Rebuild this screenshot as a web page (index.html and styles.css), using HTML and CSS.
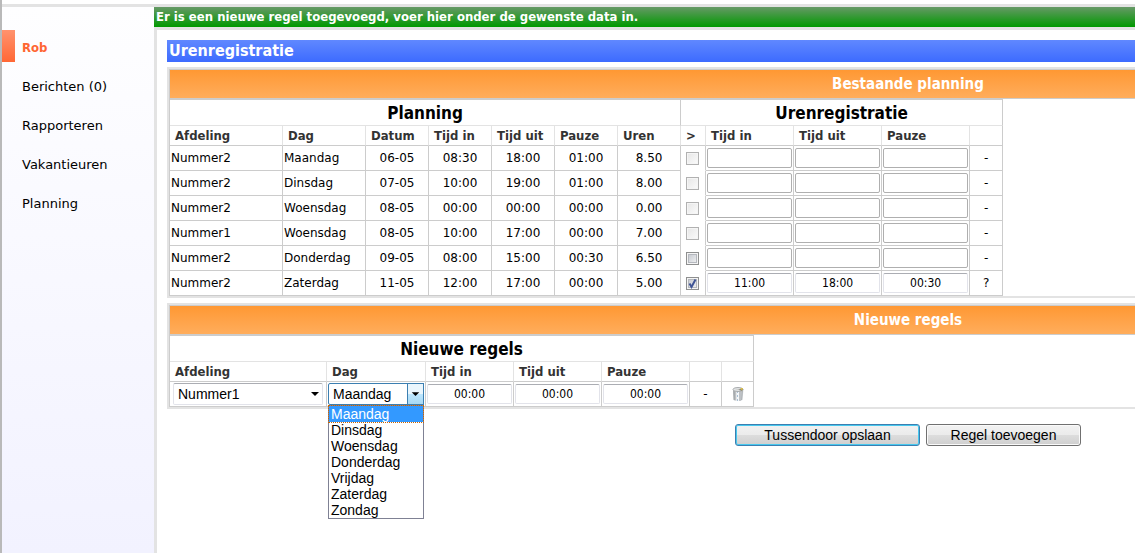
FILE: index.html
```html
<!DOCTYPE html>
<html lang="nl">
<head>
<meta charset="utf-8">
<title>Urenregistratie</title>
<link rel="stylesheet" href="styles.css">
</head>
<body>
<div class="page">
  <nav class="sidebar">
    <a class="nav-item active" href="#">Rob</a>
    <a class="nav-item" href="#">Berichten (0)</a>
    <a class="nav-item" href="#">Rapporteren</a>
    <a class="nav-item" href="#">Vakantieuren</a>
    <a class="nav-item" href="#">Planning</a>
  </nav>
  <main class="main">
    <p class="notice">Er is een nieuwe regel toegevoegd, voer hier onder de gewenste data in.</p>
    <form class="content">
      <h1 class="title">Urenregistratie</h1>

      <section class="panel">
        <h2 class="panel-title">Bestaande planning</h2>
        <table class="grid planning">
          <colgroup><col class="c-dept"><col class="c-day"><col class="c-num" span="5"><col class="c-check"><col class="c-input" span="3"><col class="c-last"></colgroup>
          <thead>
            <tr class="group"><th colspan="7">Planning</th><th colspan="5">Urenregistratie</th></tr>
            <tr class="head"><th>Afdeling</th><th>Dag</th><th>Datum</th><th>Tijd in</th><th>Tijd uit</th><th>Pauze</th><th>Uren</th><th>&gt;</th><th>Tijd in</th><th>Tijd uit</th><th>Pauze</th><th></th></tr>
          </thead>
          <tbody>
            <tr><td>Nummer2</td><td>Maandag</td><td class="num">06-05</td><td class="num">08:30</td><td class="num">18:00</td><td class="num">01:00</td><td class="num">8.50</td><td class="check"><input type="checkbox" aria-label="Overnemen" disabled></td><td class="field"><input type="text" aria-label="Tijd in" disabled></td><td class="field"><input type="text" aria-label="Tijd uit" disabled></td><td class="field"><input type="text" aria-label="Pauze" disabled></td><td class="state">-</td></tr>
            <tr><td>Nummer2</td><td>Dinsdag</td><td class="num">07-05</td><td class="num">10:00</td><td class="num">19:00</td><td class="num">01:00</td><td class="num">8.00</td><td class="check"><input type="checkbox" aria-label="Overnemen" disabled></td><td class="field"><input type="text" aria-label="Tijd in" disabled></td><td class="field"><input type="text" aria-label="Tijd uit" disabled></td><td class="field"><input type="text" aria-label="Pauze" disabled></td><td class="state">-</td></tr>
            <tr><td>Nummer2</td><td>Woensdag</td><td class="num">08-05</td><td class="num">00:00</td><td class="num">00:00</td><td class="num">00:00</td><td class="num">0.00</td><td class="check"><input type="checkbox" aria-label="Overnemen" disabled></td><td class="field"><input type="text" aria-label="Tijd in" disabled></td><td class="field"><input type="text" aria-label="Tijd uit" disabled></td><td class="field"><input type="text" aria-label="Pauze" disabled></td><td class="state">-</td></tr>
            <tr><td>Nummer1</td><td>Woensdag</td><td class="num">08-05</td><td class="num">10:00</td><td class="num">17:00</td><td class="num">00:00</td><td class="num">7.00</td><td class="check"><input type="checkbox" aria-label="Overnemen" disabled></td><td class="field"><input type="text" aria-label="Tijd in" disabled></td><td class="field"><input type="text" aria-label="Tijd uit" disabled></td><td class="field"><input type="text" aria-label="Pauze" disabled></td><td class="state">-</td></tr>
            <tr><td>Nummer2</td><td>Donderdag</td><td class="num">09-05</td><td class="num">08:00</td><td class="num">15:00</td><td class="num">00:30</td><td class="num">6.50</td><td class="check"><input type="checkbox" aria-label="Overnemen"></td><td class="field"><input type="text" aria-label="Tijd in" disabled></td><td class="field"><input type="text" aria-label="Tijd uit" disabled></td><td class="field"><input type="text" aria-label="Pauze" disabled></td><td class="state">-</td></tr>
            <tr><td>Nummer2</td><td>Zaterdag</td><td class="num">11-05</td><td class="num">12:00</td><td class="num">17:00</td><td class="num">00:00</td><td class="num">5.00</td><td class="check"><span class="tick"><input type="checkbox" aria-label="Overnemen" checked><svg viewBox="0 0 13 13" aria-hidden="true"><path d="M3.500 6.500 5.500 10 9.500 2.500" fill="none" stroke="#3f5495" stroke-width="2"/></svg></span></td><td class="field"><input type="text" aria-label="Tijd in" value="11:00"></td><td class="field"><input type="text" aria-label="Tijd uit" value="18:00"></td><td class="field"><input type="text" aria-label="Pauze" value="00:30"></td><td class="state">?</td></tr>
          </tbody>
        </table>
      </section>

      <section class="panel">
        <h2 class="panel-title">Nieuwe regels</h2>
        <table class="grid new-rows">
          <colgroup><col class="c-dept-new"><col class="c-day-new"><col class="c-input" span="3"><col class="c-small" span="2"></colgroup>
          <thead>
            <tr class="group"><th colspan="7">Nieuwe regels</th></tr>
            <tr class="head"><th>Afdeling</th><th>Dag</th><th>Tijd in</th><th>Tijd uit</th><th>Pauze</th><th></th><th></th></tr>
          </thead>
          <tbody>
            <tr>
              <td class="field pick"><div class="combo"><select aria-label="Afdeling"><option>Nummer1</option><option>Nummer2</option></select><svg class="arrow" viewBox="0 0 16 20" aria-hidden="true"><path d="M4 8h8l-4 4z"/></svg></div></td>
              <td class="field day"><div class="combo open"><select aria-label="Dag"><option>Maandag</option><option>Dinsdag</option><option>Woensdag</option><option>Donderdag</option><option>Vrijdag</option><option>Zaterdag</option><option>Zondag</option></select><svg class="arrow" viewBox="0 0 16 20" aria-hidden="true"><path d="M4 8h8l-4 4z"/></svg>
                <ul class="list" role="listbox" aria-label="Dag">
                  <li role="option" class="selected" aria-selected="true">Maandag</li><li role="option">Dinsdag</li><li role="option">Woensdag</li><li role="option">Donderdag</li><li role="option">Vrijdag</li><li role="option">Zaterdag</li><li role="option">Zondag</li>
                </ul></div></td>
              <td class="field"><input type="text" aria-label="Tijd in" value="00:00"></td>
              <td class="field"><input type="text" aria-label="Tijd uit" value="00:00"></td>
              <td class="field"><input type="text" aria-label="Pauze" value="00:00"></td>
              <td class="state">-</td>
              <td class="state"><button class="trash" type="button" aria-label="Verwijderen"><svg viewBox="0 0 16 16" aria-hidden="true"><path d="M3 3h10.500l-1 11q-4 2-8.500 0z" fill="#d3d6d9"/><path d="M3 4h2.500v10.500l-2-.5z" fill="#a7abae"/><path d="M6.500 5h2.500v10H6.500z" fill="#f4f7f9"/><path d="M9.500 5h1v10h-1z" fill="#a9aeb3"/><path d="M11.500 5h1.500l-1 9h-1z" fill="#b0b4b7"/><path d="M7.500 5v10" stroke="#a9c0d4" stroke-dasharray="2 2" fill="none"/><ellipse cx="8" cy="3.500" rx="5" ry="2" fill="#e2e4e5" stroke="#a8abad"/><path d="M5 3l3 1 2-1 3 0-1 2-3-1z" fill="#87877c"/><path d="M10 2.500l3-.5-1 2.500z" fill="#d9b936"/></svg></button></td>
            </tr>
          </tbody>
        </table>
      </section>

      <div class="actions">
        <button class="btn primary" type="button">Tussendoor opslaan</button>
        <button class="btn" type="button">Regel toevoegen</button>
      </div>
    </form>
  </main>
</div>
</body>
</html>
```

FILE: styles.css
```css
* { box-sizing: border-box; }

body {
  margin: 0;
  background: #fff;
  color: #000;
  font: 12px/16px "DejaVu Sans", Verdana, sans-serif;
}

.page {
  display: grid;
  grid-template-columns: 152px minmax(0, 1fr);
  min-height: 100vh;
  border-left: 2px solid #b9b9b9;
  padding-top: 4px;
}

.sidebar {
  border-top: 3px solid #e3e3e3;
  padding-top: 23px;
  background: linear-gradient(#fefeff, #f2f2ff);
}

.nav-item {
  display: block;
  height: 32px;
  margin-bottom: 7px;
  padding: 10px 0 0 20px;
  color: #000;
  font-size: 13px;
  text-decoration: none;
}

.nav-item.active {
  padding-left: 7px;
  border-left: 13px solid;
  border-image: linear-gradient(#ff9470, #ff6633) 1;
  border-width: 0 0 0 13px;
  color: #ff6633;
  font-family: "DejaVu Sans Condensed", Tahoma, sans-serif;
  font-weight: bold;
}

.main {
  overflow: hidden;
  border-top: 3px solid #e3e3e3;
}

.notice,
.title,
.panel-title,
.grid th {
  font-family: "DejaVu Sans Condensed", Tahoma, sans-serif;
}

.notice {
  height: 20px;
  margin: 0;
  padding: 2px;
  background: linear-gradient(#669966, #009900);
  color: #fff;
  font-size: 13px;
  font-weight: bold;
  white-space: nowrap;
}

.content {
  min-width: 1505px;
  min-height: calc(100vh - 27px);
  padding: 10px;
  border-top: 3px solid #e3e3e3;
  border-left: 3px solid #e3e3e3;
}

.title {
  height: 22px;
  margin: 0 0 5px;
  padding: 3px 2px;
  background: linear-gradient(#6088ff, #3d6bff);
  color: #fff;
  font-size: 16px;
  line-height: 16px;
}

.panel {
  max-width: 1482px;
  margin-bottom: 5px;
  border: 2px solid #e3e3e3;
}

.panel-title {
  height: 30px;
  margin: 0;
  padding-top: 6px;
  border: 1px solid #ccc;
  background: linear-gradient(#ff9833, #ffad5c);
  color: #fff;
  font-size: 15px;
  line-height: 16px;
  text-align: center;
}

.grid {
  table-layout: fixed;
  border-collapse: separate;
  border-spacing: 0;
  border: solid #ccc;
  border-width: 1px 0 0 1px;
}

.planning { width: 834px; }
.new-rows { width: 585px; }

.c-dept { width: 113px; }
.c-day { width: 83px; }
.c-num { width: 63px; }
.c-check { width: 25px; }
.c-input { width: 88px; }
.c-last { width: 33px; }
.c-dept-new { width: 157px; }
.c-day-new { width: 99px; }
.c-small { width: 32px; }

.grid th,
.grid td {
  height: 25px;
  padding: 0 1px;
  border: solid #ccc;
  border-width: 0 1px 1px 0;
  text-align: left;
}

.grid .group th {
  height: 26px;
  border-bottom-color: #e3e3e3;
  font-size: 17px;
  line-height: 20px;
  text-align: center;
}

.grid .head th {
  height: 20px;
  padding: 0 5px;
  border-right-color: #e3e3e3;
  color: #333;
  font-size: 13px;
  line-height: 16px;
}

.grid .head th:last-child { border-right-color: #ccc; }

.grid .num { text-align: center; }

.grid .check {
  padding: 0 2px 0 0;
  border-bottom-color: #fff;
}

.grid tr:last-child .check { border-bottom-color: #ccc; }

.grid .state { text-align: center; }

input[type="text"] {
  display: block;
  width: 100%;
  height: 20px;
  padding: 0;
  border: 1px solid #e2e3ea;
  border-top-color: #abadb3;
  border-radius: 2px;
  background: #fff;
  color: #000;
  font: 12px/16px "DejaVu Sans Condensed", Tahoma, sans-serif;
  text-align: center;
}

input[type="text"]:disabled { border-color: #afafaf; }

input[type="checkbox"] {
  appearance: none;
  display: block;
  width: 13px;
  height: 13px;
  margin: 0 auto;
  border: 1px solid #8e8f8f;
  background: linear-gradient(135deg, #bfc3cb, #f6f6f6);
  box-shadow: inset 0 0 0 1px #f4f4f4, inset 0 0 0 2px #b5b8be;
}

input[type="checkbox"]:disabled {
  border-color: #b1b1b1;
  background: linear-gradient(135deg, #e6e6e6, #fbfbfb);
  box-shadow: inset 0 0 0 1px #f5f5f5;
}

.tick {
  display: grid;
  justify-content: center;
}

.tick > * {
  grid-area: 1 / 1;
  width: 13px;
  height: 13px;
}

.grid .pick { padding: 0 3px; }
.grid .day { padding-right: 1px; }

.combo {
  display: grid;
  position: relative;
}

.combo select {
  grid-area: 1 / 1;
  appearance: none;
  width: 100%;
  height: 22px;
  padding: 0 4px;
  border: 1px solid #e2e3ea;
  border-top-color: #abadb3;
  border-radius: 2px;
  background: #fff;
  color: #000;
  font: 14px/18px "Liberation Sans", Arial, sans-serif;
}

.arrow {
  grid-area: 1 / 1;
  place-self: center end;
  width: 16px;
  height: 20px;
  pointer-events: none;
}

.combo.open select { border-color: #3c7fb1; }

.combo.open .arrow {
  width: 17px;
  height: 22px;
  border: 1px solid #3c7fb1;
  background: linear-gradient(#eaf6fd 50%, #bee6fd 50%, #a7d9f5);
}

.list {
  position: absolute;
  z-index: 1;
  top: 100%;
  left: 0;
  width: 100%;
  margin: 0;
  padding: 0;
  border: 1px solid #7f8194;
  background: #fff;
  font: 14px/16px "Liberation Sans", Arial, sans-serif;
  list-style: none;
}

.list li { padding-left: 2px; }

.list .selected {
  background: #3399ff;
  color: #fff;
  outline: 1px dotted #cc6600;
}

.trash {
  display: block;
  width: 16px;
  height: 16px;
  margin: 0 auto;
  padding: 0;
  border: 0;
  background: none;
}

.trash svg { display: block; }

.actions {
  display: flex;
  justify-content: center;
  gap: 6px;
  max-width: 1482px;
  padding-top: 10px;
}

.btn {
  width: 155px;
  height: 22px;
  padding: 0;
  border: 1px solid #707070;
  border-radius: 3px;
  background: linear-gradient(#f2f2f2, #ebebeb 50%, #dddddd 50%, #cfcfcf);
  box-shadow: inset 0 0 0 1px #fafafa;
  color: #000;
  font: 14px/18px "Liberation Sans", Arial, sans-serif;
}

.btn.primary {
  width: 185px;
  border-color: #3c7fb1;
  box-shadow: inset 0 0 0 1px #48c8ee;
}
```
